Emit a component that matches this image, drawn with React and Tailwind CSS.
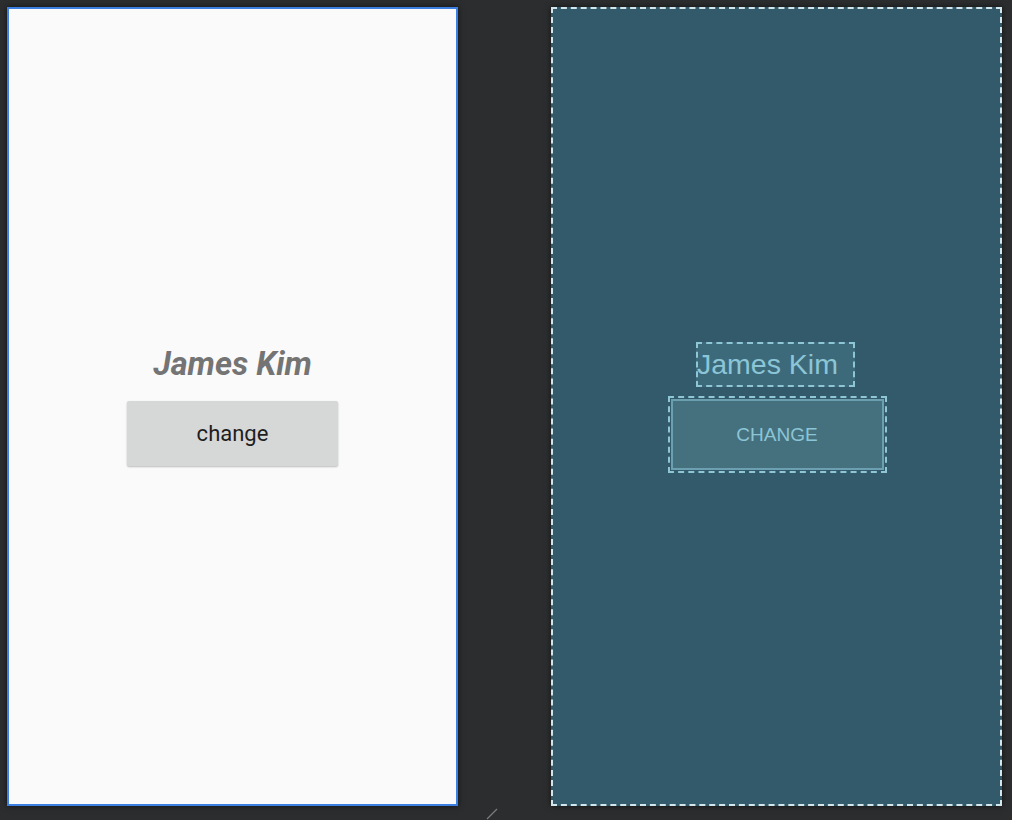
import React from 'react';

const Handle = () => (
  <svg width="14" height="12" viewBox="0 0 14 12" className="absolute left-[485px] top-[808px]">
    <line x1="2" y1="11" x2="12" y2="1" stroke="#7a7b7d" strokeWidth="1.2" />
  </svg>
);

const App = () => {
  return (
    <div className="relative w-[1012px] h-[820px] bg-[#2c2d2f] overflow-hidden flex gap-[93px] pl-[7px] pt-[7px]">
      {/* design view */}
      <div className="w-[451px] h-[799px] border-2 border-[#3c7fe2] bg-[#fafafa] shadow-[0_0_6px_rgba(0,0,0,0.6)] flex flex-col items-center pt-[336px]">
        <p className="font-['Roboto',sans-serif] italic font-bold text-[32.5px] leading-[38px] text-[#747474]">
          James Kim
        </p>
        <button className="mt-[18px] w-[211px] h-[65px] bg-[#d6d7d7] rounded-[2px] shadow-[0_1px_2px_rgba(0,0,0,0.25)] font-['Roboto',sans-serif] text-[22px] text-[#1e1e1e] flex items-center justify-center">
          change
        </button>
      </div>

      {/* blueprint view */}
      <div className="w-[451px] h-[799px] border-2 border-dashed border-[#d3e6ec] bg-[#325a6b] shadow-[0_0_6px_rgba(0,0,0,0.6)] flex flex-col items-center pt-[333px]">
        <div className="w-[159px] h-[45px] ml-[-2px] border-2 border-dashed border-[#8fc6d6] bg-[#3d6a7b] flex items-center">
          <span className="font-['Liberation_Sans',Arial,sans-serif] text-[28.5px] leading-none text-[#8cc5d6] -ml-[1px]">
            James Kim
          </span>
        </div>
        <div className="mt-[9px] w-[219px] h-[77px] ml-[1px] border-2 border-dashed border-[#8fc6d6] p-[1px]">
          <div className="w-full h-full border-2 border-[#6c9fb0] bg-[#45717f] flex items-center justify-center">
            <span className="font-['Liberation_Sans',Arial,sans-serif] text-[19px] leading-none text-[#8cc5d6]">
              CHANGE
            </span>
          </div>
        </div>
      </div>

      <Handle />
    </div>
  );
};

export default App;
